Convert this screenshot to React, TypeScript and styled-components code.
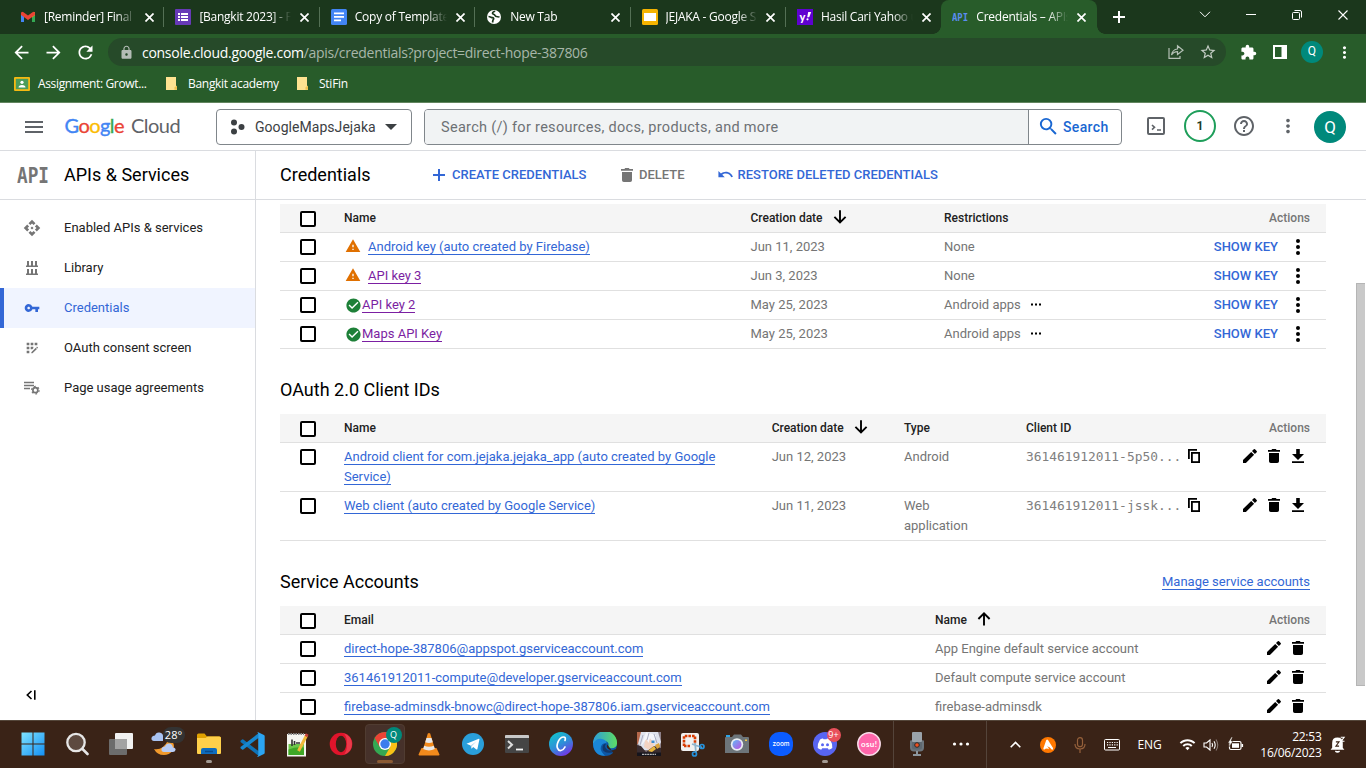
import React from 'react';
import styled, { createGlobalStyle } from 'styled-components';
import {
  MdApi, MdVpnKey, MdAppRegistration, MdMenu, MdSearch, MdHelpOutline, MdMoreVert, MdWarning,
  MdCheckCircle, MdUndo, MdExtension, MdStarBorder, MdLock, MdArrowBack, MdArrowForward, MdRefresh, MdWifi,
} from 'react-icons/md';

const Global = createGlobalStyle`
  * { box-sizing: border-box; }
  html, body { margin: 0; padding: 0; overflow: hidden; }
  body { font-family: Roboto, "Liberation Sans", sans-serif; font-size: 13px; color: #000; }
  svg { display: block; flex: none; }
`;

const ui = '"Open Sans", "Noto Sans", sans-serif';

const Screen = styled.div`
  width: 1366px; height: 768px; display: flex; flex-direction: column; overflow: hidden; background: #fff;
`;

/* ---------- browser chrome ---------- */
const TabStrip = styled.div`
  height: 34px; background: #1b371c; display: flex; padding-left: 9px; flex: none;
`;
const Tab = styled.div<{ $active?: boolean; $line?: boolean }>`
  position: relative; width: 155.4px; height: 34px; flex: none; display: flex; align-items: center;
  padding: 0 7px 0 11px; color: #fff; font: 12px ${ui};
  background: ${p => (p.$active ? '#285c2a' : 'transparent')};
  border-radius: 8px 8px 0 0;
  &::after {
    content: ''; position: absolute; right: 0; top: 7px; width: 1px; height: 20px;
    background: ${p => (p.$line ? '#547055' : 'transparent')};
  }
`;
const TabFoot = styled.i<{ $side: 'left' | 'right' }>`
  position: absolute; bottom: 0; ${p => p.$side}: -8px; width: 8px; height: 8px;
  background: radial-gradient(circle at ${p => (p.$side === 'left' ? '0 0' : '100% 0')}, transparent 7.5px, #285c2a 8px);
`;
const TabTitle = styled.span`
  width: 93px; margin-left: 8px; overflow: hidden; white-space: nowrap; line-height: 18px; letter-spacing: -0.25px;
  mask-image: linear-gradient(90deg, #000 72px, transparent 92px);
`;
const CloseBtn = styled.span`
  width: 16px; height: 16px; margin-left: auto; display: flex; align-items: center; justify-content: center;
`;
const NewTab = styled.div`width: 44px; display: flex; align-items: center; justify-content: center;`;
const WindowControls = styled.div`margin-left: auto; display: flex; height: 29px;`;
const Control = styled.div`width: 46px; display: flex; align-items: center; justify-content: center;`;

const Toolbar = styled.div`
  height: 36px; background: #285c2a; display: flex; align-items: center; padding: 0 5px 0 6px; flex: none; color: #fff;
`;
const ToolBtn = styled.div`
  width: 32px; height: 28px; display: flex; align-items: center; justify-content: center; flex: none;
`;
const NavButtons = styled.div`display: flex; width: 96px; margin: 0 0.5px 0 -0.5px;`;
const Omnibox = styled.div`
  width: 1118px; height: 28px; margin: 0 6px; border-radius: 14px; background: #264a29; display: flex; align-items: center;
  padding: 0 2px 0 11px; font: 14px ${ui}; color: #a8b7a9; letter-spacing: -0.285px;
`;
const Url = styled.span`margin-left: 8px; flex: 1; white-space: nowrap; b { color: #fff; font-weight: 400; }`;
const Profile = styled.span`
  width: 22px; height: 22px; border-radius: 50%; background: #00897b; color: #fff; font: 12px/21px Roboto, sans-serif; text-align: center;
`;
const Bookmarks = styled.div`
  height: 33px; background: #285c2a; border-bottom: 1px solid #62855f; display: flex; align-items: center;
  padding: 0 14px 5px; flex: none; color: #fff; font: 12px ${ui};
`;
const Bookmark = styled.div<{ $w: number; $gap: number; $ls: number }>`
  width: ${p => p.$w}px; display: flex; align-items: center; gap: ${p => p.$gap}px; letter-spacing: ${p => p.$ls}px; white-space: nowrap;
`;

/* ---------- console header ---------- */
const Header = styled.header`
  height: 48px; border-bottom: 1px solid #dadce0; display: flex; align-items: center; flex: none; padding: 0 20px 0 22px;
`;
const Logo = styled.div`
  width: 128px; margin: -3px 0 0 18.5px; font: 20px/24px Lato, sans-serif; color: #5f6368; white-space: nowrap; display: flex; gap: 7px;
  letter-spacing: -0.55px;
`;
const Brand = styled.span`-webkit-text-stroke: 0.35px; `;
const Tint = styled.span<{ $c: string }>`color: ${p => p.$c};`;
const ProjectPicker = styled.div`
  width: 196px; height: 36px; margin-left: 23.5px; border: 1px solid #80868b; border-radius: 4px; display: flex; align-items: center;
  padding: 0 14px 0 13px; color: #3c4043; font-size: 14px; letter-spacing: 0.05px;
`;
const ProjectName = styled.span`margin: 0 auto 0 9px; line-height: 18px;`;
const SearchBox = styled.div`
  width: 698px; height: 36px; margin-left: 12px; border: 1px solid #80868b; border-radius: 4px; display: flex; overflow: hidden;
`;
const SearchField = styled.div`
  width: 604px; background: #f1f3f4; border-right: 1px solid #80868b; color: #6d7175; font-size: 14.5px; line-height: 35px; padding-left: 16px;
  letter-spacing: 0.3px;
`;
const SearchButton = styled.div`
  flex: 1; display: flex; align-items: center; padding-left: 8px; gap: 3px; color: #1967d2; font-size: 14px; font-weight: 500; letter-spacing: 0.35px;
`;
const HeaderIcon = styled.div`
  width: 44px; height: 44px; display: flex; align-items: center; justify-content: center; color: #5f6368; flex: none;
`;
const HeaderTools = styled.div`display: flex; margin: -1px 4px 0 12px; align-items: center;`;
const CountRing = styled.span`
  width: 32px; height: 32px; border: 2px solid #1e9e5a; border-radius: 50%; color: #1e3c28; font-size: 12px; font-weight: 700; line-height: 28px; text-align: center;
`;
const Avatar = styled.span`
  width: 32px; height: 32px; border-radius: 50%; background: #00897b; color: #fff; font-size: 17px; line-height: 32px; text-align: center; flex: none;
`;

/* ---------- page ---------- */
const Body = styled.div`flex: 1; min-height: 0; display: flex;`;
const Sidebar = styled.nav`width: 256px; border-right: 1px solid #dadce0; display: flex; flex-direction: column; flex: none;`;
const Product = styled.div`
  height: 49px; border-bottom: 1px solid #dadce0; display: flex; align-items: center; padding: 0 0 1px 16.5px; gap: 15.5px; font-size: 18px; margin-bottom: 8px;
`;
const NavItem = styled.div<{ $active?: boolean }>`
  height: 40px; display: flex; align-items: center; color: ${p => (p.$active ? '#3367d6' : '#212121')};
  background: ${p => (p.$active ? '#f0f4ff' : 'transparent')};
  border-left: 4px solid ${p => (p.$active ? '#3367d6' : 'transparent')};
  padding-bottom: 1px;
`;
const NavIcon = styled.span<{ $active?: boolean }>`
  width: 56px; display: flex; justify-content: center; color: ${p => (p.$active ? '#3367d6' : '#757575')}; margin-right: 4px; padding-top: 1px;
`;
const Collapse = styled.div`margin-top: auto; height: 51px; padding: 20px 0 0 25px;`;

const Main = styled.main`flex: 1; min-width: 0; display: flex; flex-direction: column;`;
const ActionBar = styled.div`
  height: 49px; border-bottom: 1px solid #dadce0; display: flex; align-items: center; padding: 0 24px 1px; flex: none;
`;
const PageTitle = styled.h1`margin: 0; width: 152px; font-size: 18px; font-weight: 400;`;
const ActionButton = styled.div<{ $muted?: boolean; $mr?: number; $gap: number }>`
  display: flex; align-items: center; gap: ${p => p.$gap}px; margin-right: ${p => p.$mr ?? 0}px; font-weight: 500;
  color: ${p => (p.$muted ? '#757575' : '#3367d6')};
`;
const Scroll = styled.div`flex: 1; min-height: 0; display: flex; overflow: hidden;`;
const Content = styled.div`flex: 1; min-width: 0; padding: 4px 30px 0 24px;`;
const Scrollbar = styled.div`width: 10px; padding-top: 83px;`;
const Thumb = styled.div`width: 9px; height: 403px; background: #c9c9c9; border: 1px solid #b5b5b5; border-right: 0;`;

const SectionTitle = styled.div`
  display: flex; justify-content: space-between; align-items: center; padding-right: 16px; height: 65px;
  h2 { margin: 0; padding-top: 17px; font-size: 18px; line-height: 24px; font-weight: 400; }
  span { padding-top: 17px; }
`;
const Row = styled.div<{ $cols: string; $head?: boolean }>`
  display: grid; grid-template-columns: ${p => p.$cols}; border-bottom: 1px solid #e0e0e0; padding: 4px 0; line-height: 20px;
  color: ${p => (p.$head ? '#212121' : '#757575')}; background: ${p => (p.$head ? '#f5f5f5' : 'transparent')};
  ${p => p.$head && 'font-weight: 500; font-size: 12px;'}
`;
const Cell = styled.div<{ $w?: number }>`
  ${p => p.$w && `width: ${p.$w}px;`}
`;
const FlexCell = styled.div<{ $gap?: number }>`
  display: flex; height: 20px; align-items: center; gap: ${p => p.$gap ?? 0}px;
`;
const Split = styled.div`display: flex; justify-content: space-between;`;
const Mono = styled.span`font: 12.9px/20px "DejaVu Sans Mono", monospace; width: 162px; color: #808080;`;
const Link = styled.a<{ $visited?: boolean }>`
  color: ${p => (p.$visited ? '#7b1fa2' : '#3367d6')}; border-bottom: 1px solid currentColor; line-height: 20px;
`;
const Check = styled.span<{ $low?: boolean }>`
  width: 16px; height: 16px; margin: ${p => (p.$low ? 3 : 2)}px 0 0 20px; border: 2px solid #000; border-radius: 2px; background: #fff;
`;
const Actions = styled.div<{ $text?: boolean }>`
  display: flex; justify-content: flex-end; align-items: center; height: 20px; padding-right: ${p => (p.$text ? 16 : 20)}px; gap: 8px;
  color: ${p => (p.$text ? '#757575' : '#000')};
`;
const ShowKey = styled.span`color: #3367d6; font-weight: 500;`;
const IconSlot = styled.span<{ $w: number; $pull?: number; $lift?: number }>`
  width: ${p => p.$w}px; display: inline-flex; justify-content: center; margin-right: ${p => p.$pull ?? 0}px;
  margin-bottom: ${p => (p.$lift ?? 0) * 2}px;
`;

/* ---------- taskbar ---------- */
const Taskbar = styled.footer`
  height: 48px; background: #3a2317; border-top: 1px solid #54463a; display: flex; align-items: flex-start; flex: none; padding-left: 10.5px; color: #fff; font-family: ${ui};
`;
const TaskApp = styled.div<{ $active?: boolean; $running?: boolean }>`
  position: relative; width: 44px; height: 46px; flex: none; display: flex; align-items: center; justify-content: center;
  ${p => p.$running && `&::after { content: ''; position: absolute; bottom: 4px; left: 19px; width: 6px; height: 3px; border-radius: 2px; background: #a39a93; }`}
  ${p => p.$active && `&::before { content: ''; position: absolute; inset: 3px 2px 3px; border-radius: 4px; background: #46312a; border: 1px solid #503c31; }
  &::after { content: ''; position: absolute; bottom: 4px; left: 14px; width: 16px; height: 3px; border-radius: 2px; background: #8b5a33; }`}
  svg { position: relative; }
`;
const Badge = styled.span<{ $bg: string; $x: number; $y: number; $w: number; $h: number; $fs: number }>`
  position: absolute; left: ${p => p.$x}px; top: ${p => p.$y}px; width: ${p => p.$w}px; height: ${p => p.$h}px; border-radius: 8px;
  background: ${p => p.$bg}; color: #fff; font-size: ${p => p.$fs}px; line-height: ${p => p.$h - 1}px; text-align: center; white-space: nowrap;
`;
const Divider = styled.i<{ $m: string }>`width: 1px; height: 47px; background: #54443a; margin: ${p => p.$m};`;
const Tray = styled.div`display: flex; align-items: center; flex: 1; height: 47px; padding-left: 12.5px;`;
const TrayItem = styled.div<{ $w: number }>`width: ${p => p.$w}px; display: flex; justify-content: center; font-size: 12px; letter-spacing: -0.1px;`;
const Clock = styled.div`
  width: 70px; font-size: 12px; line-height: 16px; text-align: right; letter-spacing: -0.25px; white-space: nowrap;
`;

/* ---------- icons ---------- */
const Cross = ({ s = 8, w = 1.6 }: { s?: number; w?: number }) => (
  <svg width={s} height={s} viewBox="0 0 8 8" stroke="#fff" strokeWidth={(w * 8) / s} fill="none"><path d="M.4 .4l7.2 7.2M7.6 .4L.4 7.6" /></svg>
);
const Trash = () => (
  <svg width="12" height="14" viewBox="0 0 12 14" fill="currentColor"><path d="M0 1h3.4l.8-1h3.6l.8 1H12v1.7H0zM1 4h10v8.2Q11 14 9.2 14H2.8Q1 14 1 12.2z" /></svg>
);
const Pencil = () => (
  <svg width="14" height="14" viewBox="0 0 14 14" fill="currentColor"><path d="M0 11.1L8.2 2.9l2.9 2.9L2.9 14H0zM9 2.1L10.8.3q.6-.5 1.2 0l1.7 1.7q.5.6 0 1.2L11.9 5z" /></svg>
);
const Download = () => (
  <svg width="12" height="14" viewBox="0 0 12 14" fill="currentColor"><path d="M4.2 0h3.6v5H12L6 11 0 5h4.2zM0 12.3h12V14H0z" /></svg>
);
const Copy = () => (
  <svg width="12" height="14" viewBox="0 0 12 14" fill="none" stroke="#000" strokeWidth="1.8"><path d="M.9 10V.9H9" /><rect x="3.9" y="3.9" width="7.2" height="9.2" /></svg>
);
const Arrow = ({ up }: { up?: boolean }) => (
  <svg width="14" height="14" viewBox="0 0 14 14" fill="none" stroke="#000" strokeWidth="1.9">
    {up ? <path d="M7 13.6V1.6M1.4 7L7 1.4 12.6 7" /> : <path d="M7 .2v12M1.4 6.8L7 12.4l5.6-5.6" />}
  </svg>
);
const Dots = () => (
  <svg width="12" height="3" viewBox="0 0 12 3" fill="#000"><path d="M1 .5h2v2H1zM5 .5h2v2H5zM9 .5h2v2H9z" /></svg>
);
const MoreDots = () => (
  <svg width="4" height="16" viewBox="0 0 4 16" fill="currentColor"><circle cx="2" cy="2" r="2" /><circle cx="2" cy="8" r="2" /><circle cx="2" cy="14" r="2" /></svg>
);
const ApiMark = ({ w, h, c }: { w: number; h: number; c: string }) => (
  <svg width={w} height={h} viewBox="0 0 32 18" fill={c}>
    <text x="0" y="17" fontFamily="DejaVu Sans Mono" fontWeight="700" fontSize="22" textLength="32" lengthAdjust="spacingAndGlyphs">API</text>
  </svg>
);
const LibraryIcon = () => (
  <svg width="14" height="14" viewBox="0 0 14 14" fill="currentColor"><path d="M2 0h2v4.5h2V0h2v4.5h2V0h2v4.5h1V6H1V4.5h1zM2 8h2v4.5h2V8h2v4.5h2V8h2v4.5h1V14H1v-1.5h1z" /></svg>
);
const Agreements = () => (
  <svg width="16" height="14" viewBox="0 0 16 14"><path d="M0 1.5h10M0 4.5h10M0 7.5h6" stroke="currentColor" strokeWidth="1.6" /><g transform="translate(6.8 4.6) scale(.38)" fill="none" stroke="currentColor"><circle cx="12" cy="12" r="6.5" strokeWidth="4.5" /><circle cx="12" cy="12" r="10" strokeWidth="3" strokeDasharray="5 5.47" /></g></svg>
);
const Form = () => (
  <svg width="16" height="16" viewBox="0 0 16 16"><rect width="16" height="16" rx="1" fill="#673ab7" /><path d="M3 4h2v2H3zM3 7h2v2H3zM3 10h2v2H3zM6 4h7v2H6zM6 7h7v2H6zM6 10h7v2H6z" fill="#fff" /></svg>
);
const Gmail = () => (
  <svg width="16" height="16" viewBox="0 0 16 16"><path d="M1 4v9h3V7z" fill="#4285f4" /><path d="M15 4v9h-3V7z" fill="#34a853" /><path d="M12 4.5L15 3v3l-3 2.5z" fill="#fbbc04" /><path d="M1 4.5Q1 2 3.5 3.2L8 6.5l4.5-3.3Q15 2 15 4.5V6l-7 5-7-5z" fill="#ea4335" /></svg>
);
const Docs = () => (
  <svg width="16" height="16" viewBox="0 0 16 16"><rect width="16" height="16" rx="1.5" fill="#4285f4" /><path d="M3 3.5h10v1.8H3zM3 7h10v1.8H3zM3 10.5h7v1.8H3z" fill="#fff" /></svg>
);
const Globe = () => (
  <svg width="16" height="16" viewBox="0 0 16 16"><circle cx="8" cy="8" r="7" fill="#fff" /><path d="M2.5 7.5c2 0 2.5 1 4 1.2 1.5.3 1.500 1.300.5 2.300l-.5 2.500M9 2c-1 1-2.500 1-2.500 2.200S8.500 5 9 6.500s2.500 1 4.500 1.500" fill="none" stroke="#1b371c" strokeWidth="1.7" /></svg>
);
const Slides = () => (
  <svg width="16" height="16" viewBox="0 0 16 16"><rect width="16" height="16" rx="1.5" fill="#f5b400" /><rect x="2" y="4" width="12" height="8" fill="#fff" /></svg>
);
const Yahoo = () => (
  <svg width="16" height="16" viewBox="0 0 16 16"><rect width="16" height="16" fill="#5f01d1" /><text x="2.5" y="11.5" fontFamily="Lato" fontWeight="900" fontSize="11" fill="#fff">y</text><path d="M11.2 3h3l-2 5.2h-2z" fill="#fff" /><circle cx="10.5" cy="10.3" r="1.1" fill="#fff" /></svg>
);
const Classroom = () => (
  <svg width="16" height="14" viewBox="0 0 16 14"><rect width="16" height="14" rx="1" fill="#f5b912" /><rect x="1.8" y="1.8" width="12.4" height="10.4" fill="#4b9c5a" /><circle cx="8" cy="5.3" r="1.6" fill="#fff" /><path d="M4.5 10.5q0-2.5 3.5-2.5t3.5 2.5z" fill="#fff" /></svg>
);
const Folder = () => (
  <svg width="13" height="15" viewBox="0 0 13 15"><path d="M1 1h10v9l1 1v3H1z" fill="#ffe391" /><path d="M9.5 13.8v-2.6L12 9.5v4.3z" fill="#f0c24f" /></svg>
);

/* taskbar apps */
const WindowsLogo = () => (
  <svg width="24" height="24" viewBox="0 0 24 24"><defs><linearGradient id="wn" x1="0" y1="0" x2="1" y2="1"><stop stopColor="#7fe3ff" /><stop offset="1" stopColor="#1390f5" /></linearGradient></defs><path d="M.5 .5h11v11H.5zM12.5 .5h11v11h-11zM.5 12.5h11v11H.5zM12.5 12.5h11v11h-11z" fill="url(#wn)" /></svg>
);
const SearchApp = () => (
  <svg width="24" height="24" viewBox="0 0 24 24"><circle cx="11" cy="10.5" r="8.7" fill="#5d4a40" stroke="#e6e6e6" strokeWidth="2.3" /><path d="M17.5 17l5 5" stroke="#e6e6e6" strokeWidth="2.6" strokeLinecap="round" /></svg>
);
const TaskView = () => (
  <svg width="24" height="24" viewBox="0 0 24 24"><rect x="6" y="1" width="18" height="16" rx="1" fill="#f1f1f1" /><rect x="0" y="7" width="18" height="16" rx="1" fill="#6c6c6c" /><rect x="6" y="7" width="12" height="10" fill="#a3a3a3" /></svg>
);
const Weather = () => (
  <svg width="28" height="26" viewBox="0 0 28 26"><path d="M3 10q-3-.5-2.5-3T4 4.500Q5 1 8.500 1.500T12 5v5z" fill="#a9c3f2" /><path d="M17 9.500q6 0 6 6l-1 4q-4 4.500-9 4.500-7 0-10-6 9 1.500 14-8.500z" fill="#f19a2c" /><path d="M13 21q-3-.5-2.500-3t3.500-2.500q1-3 4-3t4 4q3 .5 2.500 2.500T22 21z" fill="#b9cdf5" /></svg>
);
const Explorer = () => (
  <svg width="26" height="24" viewBox="0 0 26 24"><path d="M1 3q0-1.500 1.500-1.500h6l2.500 3H23q2 0 2 1.500v10H1z" fill="#e0a100" /><path d="M1 6h8.500l2-1.500H23.500Q25 4.500 25 6v15q0 1-1 1H2q-1 0-1-1z" fill="#ffd04a" /><path d="M5 22v-4q0-2 2-2h12q2 0 2 2v4z" fill="#0f6cbd" /><path d="M9 19.500h8" stroke="#0a4a8a" strokeWidth="1.5" /></svg>
);
const VSCode = () => (
  <svg width="25" height="25" viewBox="0 0 24 24"><path d="M.5 8.500L2 7.200q.6-.4 1.200 0L18 18.500V23L.5 9.700z" fill="#0f73b8" /><path d="M.5 15.500L2 16.800q.6.400 1.200 0L18 5.500V1L.5 14.300z" fill="#1787cf" /><path d="M17.500.3L23 2.800q.700.400.700 1.200v16q0 .800-.7 1.200l-5.500 2.500q-.8.200-1.200-.5Q17.500 23.500 17.500 22V2q0-1.500-1.200-1.300z" fill="#2ba5f3" /></svg>
);
const NotepadPP = () => (
  <svg width="24" height="25" viewBox="0 0 24 25"><rect x="2" y="2" width="19" height="22.500" fill="#f5f5f0" /><rect x="3.500" y="12" width="15.500" height="11" fill="#6cc84a" /><path d="M3.500 17.500q7-3 15.500-2V23H3.500z" fill="#3fa726" /><path d="M3 2h16" stroke="#888" strokeWidth="2" strokeDasharray="1.5 1" /><path d="M7 7.500v6.500M9.500 9v4M11 11h4" stroke="#333" strokeWidth="1.600" /><path d="M13.500 19L21.500 3.500" stroke="#f0b93a" strokeWidth="3" /><path d="M21 4.500l1.200-2.500" stroke="#c3423a" strokeWidth="3" /></svg>
);
const Opera = () => (
  <svg width="24" height="24" viewBox="0 0 24 24"><circle cx="12" cy="12" r="11.300" fill="#e0142b" /><ellipse cx="12" cy="12" rx="5.200" ry="8.300" fill="#3a2317" /><path d="M14 1q9 2.500 9 11t-9 11q4-2 4-11T14 1z" fill="#f04a58" opacity=".7" /></svg>
);
const Chrome = () => (
  <svg width="24" height="24" viewBox="0 0 24 24"><circle cx="12" cy="12" r="12" fill="#34a853" /><path d="M12 0a12 12 0 0 1 10.400 6H12L6.800 15 1.600 6A12 12 0 0 1 12 0z" fill="#ea4335" /><path d="M22.400 6A12 12 0 0 1 12 24l5.200-9L12 6z" fill="#fbc116" /><circle cx="12" cy="12" r="6" fill="#fff" /><circle cx="12" cy="12" r="4.700" fill="#3b7ded" /></svg>
);
const Vlc = () => (
  <svg width="22" height="24" viewBox="0 0 22 24"><path d="M3.500 16h15l3 6.500q0 1-1 1h-19q-1 0-1-1z" fill="#f28a1c" /><path d="M9.800 1.500q1.200-1 2.400 0L17.500 19Q11 22.500 4.500 19z" fill="#f28a1c" /><path d="M8.500 6h5l1.300 4.300q-3.800 1.600-7.600 0zM6.200 13.700q4.800 2.200 9.600 0l1 3.300q-5.800 2.800-11.600 0z" fill="#e9e9e9" /></svg>
);
const Telegram = () => (
  <svg width="22" height="22" viewBox="0 0 22 22"><circle cx="11" cy="11" r="11" fill="#2a9fda" /><path d="M4.500 10.800L16.800 5.800q.8-.2.600.7l-2 9.500q-.2.900-1 .4l-3.200-2.300-1.600 1.600-1-3.200z" fill="#fff" /><path d="M8.600 12.500l6-4.200-4.600 4.700-.3 2.600z" fill="#b7d9ef" /></svg>
);
const Terminal = () => (
  <svg width="24" height="20" viewBox="0 0 24 20"><rect y="1" width="24" height="18" rx="1" fill="#454545" /><path d="M0 2q0-1 1-1h22q1 0 1 1v2H0z" fill="#c8c8c8" /><path d="M3 7l4 3.700L3 14.500" stroke="#ddd" strokeWidth="2" fill="none" /><path d="M11 15.500h7" stroke="#f4f4f4" strokeWidth="1.8" /></svg>
);
const Canva = () => (
  <svg width="24" height="24" viewBox="0 0 24 24"><defs><linearGradient id="cv" x1=".2" y1="0" x2=".8" y2="1"><stop stopColor="#10c4cc" /><stop offset=".5" stopColor="#2e8fd8" /><stop offset="1" stopColor="#7d2ae8" /></linearGradient></defs><circle cx="12" cy="12" r="12" fill="url(#cv)" /><path d="M16 8.500q1.200-3.500-1.500-3.500-3.200 0-5.200 4.300t-.8 6.800q1 2.700 3.400 2.400 2.600-.4 4.100-3.500" fill="none" stroke="#fff" strokeWidth="1.700" strokeLinecap="round" /></svg>
);
const Edge = () => (
  <svg width="24" height="24" viewBox="0 0 24 24"><defs><linearGradient id="eg" x1="0" y1="0" x2="1" y2="0"><stop stopColor="#2c9ddb" /><stop offset="1" stopColor="#5ddc64" /></linearGradient></defs><circle cx="12" cy="12" r="12" fill="#0d57a6" /><path d="M0 12A12 12 0 0 1 24 10q.5 6-5.500 6.200-4.500 0-3-3 .6-3.200-3.500-4.200Q5 7.500 0 12z" fill="url(#eg)" /><path d="M0 12q3-6 9-5 5 1 4.500 4.500-4-1-5.500 3T12 23.800Q1 24 0 12z" fill="#1b87d8" /><path d="M13.300 11.500q-2.500 2.500 0 5.500t9.200 0q-1 2-3 3.500Q9 22 9.500 15q.5-3.500 3.800-3.500z" fill="#10386d" /><path d="M14.500 12.500q-2 3 1.500 5t7-.5l2 3-2 5z" fill="#3a2317" /></svg>
);
const Portrait = () => (
  <svg width="24" height="24" viewBox="0 0 24 24"><rect width="24" height="24" fill="#8d8088" /><path d="M3 0h18l3 10-4 8H4L0 9z" fill="#dfe2ec" /><path d="M8 8q4-3 9 1l-1 7-4 2-5-3z" fill="#f3d3c2" /><path d="M9 0L4 14l5.500-7 2 4 1.500-5 4 5.500L19 3z" fill="#f4f5fa" /><path d="M6 3L3 13M17 2l3 9M12 1l-2 7" stroke="#a3a6bb" strokeWidth=".9" /><path d="M14.500 8.500h3v2.500h-3z" fill="#3d8fd0" /><path d="M0 13l4 1 5 6 8-6 7 2v8H0z" fill="#3a2d30" /><path d="M11 19l6-5 2 3-4 3z" fill="#e8b63c" /><path d="M18 13l4-2 1 4-3 2z" fill="#dba43a" /><path d="M0 0h4L1 12H0z" fill="#b5674a" /><rect y="20.500" width="24" height="3.500" fill="#15141c" /><path d="M5 22.300h14" stroke="#ddd" strokeWidth="1" strokeDasharray="2 .6" /></svg>
);
const Snip = () => (
  <svg width="25" height="25" viewBox="0 0 25 25"><rect x="1" y="1" width="18" height="18" rx="2" fill="#f1f1f1" /><path d="M4 14V4h11v8" fill="none" stroke="#d83b01" strokeWidth="2.600" strokeDasharray="2.600 1" /><path d="M4 14h6" stroke="#d83b01" strokeWidth="2.500" strokeDasharray="2.500 1" /><path d="M12 12l10 3.500M15 11l1 10" stroke="#8fb4cc" strokeWidth="1.8" /><circle cx="22" cy="14.500" r="2" fill="none" stroke="#2491dc" strokeWidth="1.700" /><circle cx="14.500" cy="22" r="2" fill="none" stroke="#2491dc" strokeWidth="1.700" /></svg>
);
const Camera = () => (
  <svg width="24" height="22" viewBox="0 0 24 22"><defs><linearGradient id="cm" x1="0" y1="0" x2="1" y2="1"><stop stopColor="#5fb8f5" /><stop offset="1" stopColor="#c04fe0" /></linearGradient></defs><path d="M7 4l2-2.500h7L18 4h5q1 0 1 1v15H0V5q0-1 1-1z" fill="#6d757a" /><rect x="1" y="2" width="4" height="2" fill="#2ea4e6" /><rect x="20" y="6.500" width="2" height="1.500" fill="#f3c844" /><circle cx="12" cy="11.500" r="6.200" fill="#e9edf2" /><circle cx="12" cy="11.500" r="4.500" fill="url(#cm)" /></svg>
);
const Zoom = () => (
  <svg width="24" height="24" viewBox="0 0 24 24"><rect width="24" height="24" rx="10" fill="#0b5cff" /><text x="12" y="14.200" textAnchor="middle" fontFamily="Inter" fontWeight="500" fontSize="7" textLength="17" lengthAdjust="spacingAndGlyphs" fill="#fff">zoom</text></svg>
);
const Discord = () => (
  <svg width="24" height="24" viewBox="0 0 24 24"><circle cx="12" cy="12" r="12" fill="#5865f2" /><path d="M7 7.500Q9 6.400 10 6.500l.500.800h3l.5-.8q1 0 3 1 2.800 4.500 2.300 8.500-1.500 1.300-3.500 1.700l-1-1.500H9.200l-1 1.500Q6.200 17.300 4.700 16 4.200 12 7 7.500z" fill="#fff" /><circle cx="9.500" cy="12.700" r="1.500" fill="#5865f2" /><circle cx="14.500" cy="12.700" r="1.500" fill="#5865f2" /></svg>
);
const Osu = () => (
  <svg width="24" height="24" viewBox="0 0 24 24"><circle cx="12" cy="12" r="11.200" fill="#ff66ab" stroke="#f7dbe8" strokeWidth="1.500" /><text x="12" y="14.500" textAnchor="middle" fontFamily="Lato" fontWeight="700" fontSize="8" textLength="16" fill="#fff">osu!</text></svg>
);
const Recorder = () => (
  <svg width="16" height="24" viewBox="0 0 16 24"><path d="M2 8.500v7q0 3 3 3h6q3 0 3-3v-7" fill="#5e6870" stroke="#6c757c" strokeWidth="2" /><rect x="3" width="10" height="10" rx="1" fill="#9aa3aa" /><circle cx="8" cy="13" r="2.300" fill="#f0501e" stroke="#2b2b2b" /><path d="M8 19v4M4 23h8" stroke="#8c959d" strokeWidth="2" /></svg>
);

const tabs: { title: string; icon: React.ReactNode }[] = [
  { title: '[Reminder] Final D', icon: <Gmail /> },
  { title: '[Bangkit 2023] - F', icon: <Form /> },
  { title: 'Copy of Template', icon: <Docs /> },
  { title: 'New Tab', icon: <Globe /> },
  { title: 'JEJAKA - Google S', icon: <Slides /> },
  { title: 'Hasil Cari Yahoo u', icon: <Yahoo /> },
  { title: 'Credentials – APIs', icon: <ApiMark w={16} h={10} c="#5b8def" /> },
];

const nav = [
  { label: 'Enabled APIs & services', icon: <MdApi size={18} /> },
  { label: 'Library', icon: <LibraryIcon /> },
  { label: 'Credentials', icon: <MdVpnKey size={16} />, active: true },
  { label: 'OAuth consent screen', icon: <MdAppRegistration size={16} /> },
  { label: 'Page usage agreements', icon: <Agreements /> },
];

const keys = [
  { name: 'Android key (auto created by Firebase)', date: 'Jun 11, 2023', limit: 'None', warn: true },
  { name: 'API key 3', date: 'Jun 3, 2023', limit: 'None', warn: true, visited: true },
  { name: 'API key 2', date: 'May 25, 2023', limit: 'Android apps', visited: true },
  { name: 'Maps API Key', date: 'May 25, 2023', limit: 'Android apps', visited: true },
];
const clients = [
  { name: 'Android client for com.jejaka.jejaka_app (auto created by Google Service)', date: 'Jun 12, 2023', type: 'Android', id: '361461912011-5p50...' },
  { name: 'Web client (auto created by Google Service)', date: 'Jun 11, 2023', type: 'Web application', id: '361461912011-jssk...' },
];
const accounts = [
  { email: 'direct-hope-387806@appspot.gserviceaccount.com', name: 'App Engine default service account' },
  { email: '361461912011-compute@developer.gserviceaccount.com', name: 'Default compute service account' },
  { email: 'firebase-adminsdk-bnowc@direct-hope-387806.iam.gserviceaccount.com', name: 'firebase-adminsdk' },
];
const keyCols = '64px 406.5px 193.5px 1fr';
const clientCols = '64px 427.7px 132.3px 122px 182px 1fr';
const accountCols = '64px 591px 260px 1fr';

const SortHead = ({ label, up }: { label: string; up?: boolean }) => (
  <FlexCell $gap={10}>{label}<IconSlot $w={14} $lift={1}><Arrow up={up} /></IconSlot></FlexCell>
);

export default function App() {
  return (
    <Screen>
      <Global />
      <TabStrip>
        {tabs.map((t, i) => (
          <Tab key={t.title} $active={i === 6} $line={i < 5}>
            {i === 6 && <><TabFoot $side="left" /><TabFoot $side="right" /></>}
            {t.icon}
            <TabTitle>{t.title}</TabTitle>
            <CloseBtn><Cross s={9} w={1.7} /></CloseBtn>
          </Tab>
        ))}
        <NewTab><svg width="12" height="12" viewBox="0 0 12 12"><path d="M6 0v12M0 6h12" stroke="#fff" strokeWidth="2" /></svg></NewTab>
        <WindowControls>
          <Control><svg width="12" height="7" viewBox="0 0 12 7"><path d="M1 .8l5 5 5-5" stroke="#fff" fill="none" /></svg></Control>
          <Control><svg width="10" height="1"><rect width="10" height="1" fill="#fff" /></svg></Control>
          <Control><svg width="10" height="10" viewBox="0 0 10 10" fill="none" stroke="#fff"><rect x=".5" y="2.5" width="7" height="7" rx="1" /><path d="M2.5 .5H8q1.5 0 1.5 1.5v5.5" /></svg></Control>
          <Control><Cross s={10} w={1.1} /></Control>
        </WindowControls>
      </TabStrip>
      <Toolbar>
        <NavButtons>
          <ToolBtn><MdArrowBack size={21} /></ToolBtn>
          <ToolBtn><MdArrowForward size={21} /></ToolBtn>
          <ToolBtn><MdRefresh size={21} /></ToolBtn>
        </NavButtons>
        <Omnibox>
          <MdLock size={15} color="#b4bcb6" />
          <Url><b>console.cloud.google.com</b>/apis/credentials?project=direct-hope-387806</Url>
          <ToolBtn>
            <svg width="16" height="16" viewBox="0 0 16 16" fill="none" stroke="#b4c0b5" strokeWidth="1.2"><path d="M1 4v10.4h11V12M9.5 5V1.8L15 6.2l-5.5 4.3V7.6Q5.5 7.6 3.5 11 4.5 5.5 9.5 5z" /></svg>
          </ToolBtn>
          <ToolBtn><MdStarBorder size={18} color="#c3ccc4" /></ToolBtn>
        </Omnibox>
        <ToolBtn><MdExtension size={17} /></ToolBtn>
        <ToolBtn><svg width="14" height="14" viewBox="0 0 14 14"><path d="M0 0h14v14H0zM2 2v10h6.5V2z" fill="#fff" fillRule="evenodd" /></svg></ToolBtn>
        <ToolBtn><Profile>Q</Profile></ToolBtn>
        <ToolBtn><MdMoreVert size={19} /></ToolBtn>
      </Toolbar>
      <Bookmarks>
        <Bookmark $w={151} $gap={8} $ls={-0.35}><Classroom />Assignment: Growt...</Bookmark>
        <Bookmark $w={131} $gap={10} $ls={-0.3}><Folder />Bangkit academy</Bookmark>
        <Bookmark $w={60} $gap={10} $ls={-0.25}><Folder />StiFin</Bookmark>
      </Bookmarks>

      <Header>
        <MdMenu size={24} color="#5f6368" />
        <Logo>
          <Brand>
            <Tint $c="#4285f4">G</Tint><Tint $c="#ea4335">o</Tint><Tint $c="#fbbc04">o</Tint><Tint $c="#4285f4">g</Tint><Tint $c="#34a853">l</Tint><Tint $c="#ea4335">e</Tint>
          </Brand>
          <span>Cloud</span>
        </Logo>
        <ProjectPicker>
          <svg width="16" height="16" viewBox="0 0 16 16" fill="#3c4043"><circle cx="4" cy="3.5" r="3" /><circle cx="4" cy="12.5" r="3" /><circle cx="11.5" cy="8" r="3" /></svg>
          <ProjectName>GoogleMapsJejaka</ProjectName>
          <svg width="12" height="6" viewBox="0 0 12 6"><path d="M0 0h12L6 6z" fill="#3c4043" /></svg>
        </ProjectPicker>
        <SearchBox>
          <SearchField>Search (/) for resources, docs, products, and more</SearchField>
          <SearchButton><MdSearch size={23} />Search</SearchButton>
        </SearchBox>
        <HeaderTools>
          <HeaderIcon><svg width="18" height="18" viewBox="0 0 18 18" fill="none" stroke="#5f6368" strokeWidth="2"><rect x="1" y="1" width="16" height="16" rx="1" /><path d="M5 8l2.5 2.3L5 12.6M10 13h4" strokeWidth="1.6" /></svg></HeaderIcon>
          <HeaderIcon><CountRing>1</CountRing></HeaderIcon>
          <HeaderIcon><MdHelpOutline size={24} /></HeaderIcon>
          <HeaderIcon><MdMoreVert size={22} /></HeaderIcon>
        </HeaderTools>
        <Avatar>Q</Avatar>
      </Header>

      <Body>
        <Sidebar>
          <Product><ApiMark w={32} h={18} c="#757575" />APIs &amp; Services</Product>
          {nav.map(n => (
            <NavItem key={n.label} $active={n.active}><NavIcon $active={n.active}>{n.icon}</NavIcon>{n.label}</NavItem>
          ))}
          <Collapse><svg width="12" height="12" viewBox="0 0 12 12" fill="none" stroke="#000" strokeWidth="1.6"><path d="M6.5 2L2.3 6l4.2 4M9.8 1.2v9.6" /></svg></Collapse>
        </Sidebar>
        <Main>
          <ActionBar>
            <PageTitle>Credentials</PageTitle>
            <ActionButton $gap={6} $mr={34.5}>
              <svg width="14" height="12" viewBox="0 0 14 12"><path d="M7 0v12M1 6h12" stroke="#3367d6" strokeWidth="2" /></svg>CREATE CREDENTIALS
            </ActionButton>
            <ActionButton $muted $gap={6} $mr={32}><Trash />DELETE</ActionButton>
            <ActionButton $gap={4}><MdUndo size={17} />RESTORE DELETED CREDENTIALS</ActionButton>
          </ActionBar>
          <Scroll>
            <Content>
              <Row $cols={keyCols} $head>
                <Check $low /><Cell>Name</Cell><SortHead label="Creation date" />
                <Split><Cell>Restrictions</Cell><Actions $text>Actions</Actions></Split>
              </Row>
              {keys.map(k => (
                <Row key={k.name} $cols={keyCols}>
                  <Check />
                  <FlexCell>
                    <IconSlot $w={18} $pull={k.warn ? 6 : 0} $lift={k.warn ? 1 : 0}>{k.warn ? <MdWarning size={16} color="#e07000" /> : <MdCheckCircle size={17} color="#1e8038" />}</IconSlot>
                    <span><Link $visited={k.visited}>{k.name}</Link></span>
                  </FlexCell>
                  <Cell>{k.date}</Cell>
                  <Split>
                    <FlexCell $gap={9}>{k.limit}{k.limit !== 'None' && <IconSlot $w={12} $lift={1}><Dots /></IconSlot>}</FlexCell>
                    <Actions><ShowKey>SHOW KEY</ShowKey><IconSlot $w={24} $pull={-4}><MoreDots /></IconSlot></Actions>
                  </Split>
                </Row>
              ))}
              <SectionTitle><h2>OAuth 2.0 Client IDs</h2></SectionTitle>
              <Row $cols={clientCols} $head>
                <Check $low /><Cell>Name</Cell><SortHead label="Creation date" /><Cell>Type</Cell><Cell>Client ID</Cell><Actions $text>Actions</Actions>
              </Row>
              {clients.map(c => (
                <Row key={c.id} $cols={clientCols}>
                  <Check />
                  <Cell $w={390}><Link>{c.name}</Link></Cell>
                  <Cell>{c.date}</Cell>
                  <Cell $w={70}>{c.type}</Cell>
                  <FlexCell><Mono>{c.id}</Mono><IconSlot $w={12} $lift={1}><Copy /></IconSlot></FlexCell>
                  <Actions>
                    <IconSlot $w={16} $lift={1}><Pencil /></IconSlot><IconSlot $w={16} $lift={1}><Trash /></IconSlot><IconSlot $w={16} $lift={1}><Download /></IconSlot>
                  </Actions>
                </Row>
              ))}
              <SectionTitle><h2>Service Accounts</h2><span><Link>Manage service accounts</Link></span></SectionTitle>
              <Row $cols={accountCols} $head>
                <Check $low /><Cell>Email</Cell><SortHead label="Name" up /><Actions $text>Actions</Actions>
              </Row>
              {accounts.map(a => (
                <Row key={a.email} $cols={accountCols}>
                  <Check />
                  <Cell><Link>{a.email}</Link></Cell>
                  <Cell>{a.name}</Cell>
                  <Actions><IconSlot $w={16} $lift={1}><Pencil /></IconSlot><IconSlot $w={16} $lift={1}><Trash /></IconSlot></Actions>
                </Row>
              ))}
            </Content>
            <Scrollbar><Thumb /></Scrollbar>
          </Scroll>
        </Main>
      </Body>

      <Taskbar>
        <TaskApp><WindowsLogo /></TaskApp>
        <TaskApp><SearchApp /></TaskApp>
        <TaskApp><TaskView /></TaskApp>
        <TaskApp><Weather /><Badge $bg="#333" $x={20} $y={6} $w={22} $h={16} $fs={11}>28°</Badge></TaskApp>
        <TaskApp $running><Explorer /></TaskApp>
        <TaskApp><VSCode /></TaskApp>
        <TaskApp><NotepadPP /></TaskApp>
        <TaskApp><Opera /></TaskApp>
        <TaskApp $active><Chrome /><Badge $bg="#00897b" $x={23} $y={6} $w={16} $h={16} $fs={9}>Q</Badge></TaskApp>
        <TaskApp><Vlc /></TaskApp>
        <TaskApp><Telegram /></TaskApp>
        <TaskApp><Terminal /></TaskApp>
        <TaskApp><Canva /></TaskApp>
        <TaskApp><Edge /></TaskApp>
        <TaskApp><Portrait /></TaskApp>
        <TaskApp><Snip /></TaskApp>
        <TaskApp><Camera /></TaskApp>
        <TaskApp><Zoom /></TaskApp>
        <TaskApp $running><Discord /><Badge $bg="#e8505b" $x={24} $y={7} $w={14} $h={14} $fs={9}>9+</Badge></TaskApp>
        <TaskApp><Osu /></TaskApp>
        <Divider $m="0 1px 0 2.5px" />
        <TaskApp><Recorder /></TaskApp>
        <TaskApp><svg width="18" height="4" viewBox="0 0 18 4" fill="#fff"><circle cx="2.5" cy="2" r="1.6" /><circle cx="9" cy="2" r="1.6" /><circle cx="15.5" cy="2" r="1.6" /></svg></TaskApp>
        <Divider $m="0 0 0 3px" />
        <Tray>
          <TrayItem $w={32}><svg width="11" height="7" viewBox="0 0 11 7"><path d="M.7 6.2L5.5 1.4l4.8 4.8" fill="none" stroke="#fff" strokeWidth="1.6" /></svg></TrayItem>
          <TrayItem $w={32}><svg width="16" height="16" viewBox="0 0 16 16"><circle cx="8" cy="8" r="8" fill="#ff7800" /><path d="M6.2 3.2q.8-1.200 1.800-.2l5 8q.6 1.800-1 1.700-2.500-3.200-5-3.500 1.500 1.200 2 3-2.500-1.500-5 .6-1-.5-.5-1.800z" fill="#fff" /></svg></TrayItem>
          <TrayItem $w={32}><svg width="12" height="16" viewBox="0 0 12 16" fill="none" stroke="#95603b" strokeWidth="1.2"><rect x="3.5" y=".7" width="5" height="9" rx="2.5" /><path d="M1 7q0 5 5 5t5-5M6 12v4" /></svg></TrayItem>
          <TrayItem $w={32}><svg width="16" height="12" viewBox="0 0 16 12"><rect x=".5" y=".5" width="15" height="10.5" rx="1" fill="none" stroke="#fff" /><path d="M3 3.5h11M3 5.8h11" stroke="#fff" strokeWidth="1.2" strokeDasharray="1.2 1.2" /><path d="M4 8.5h8" stroke="#fff" /></svg></TrayItem>
          <TrayItem $w={44}>ENG</TrayItem>
          <TrayItem $w={32}><MdWifi size={17} /></TrayItem>
          <TrayItem $w={15}><svg width="16" height="14" viewBox="0 0 16 14" fill="none" stroke="#fff" strokeWidth="1.1"><path d="M1 5h2.5L7 2v10L3.5 9H1z" /><path d="M9 5q1.2 2 0 4M11 3.2q2.4 3.8 0 7.6" /><path d="M13 1.5q3.5 5.5 0 11" opacity=".4" /></svg></TrayItem>
          <TrayItem $w={33}><svg width="17" height="15" viewBox="0 0 17 15"><rect x="2.5" y="4.5" width="11.5" height="8" rx="1.5" fill="none" stroke="#fff" strokeWidth="1.2" /><rect x="5" y="6.3" width="7" height="4.5" fill="#fff" /><path d="M15.3 7v3" stroke="#fff" strokeWidth="1.6" /><path d="M4.5 0L1 6h2l-1 4 4-6H4l1.5-4z" fill="#fff" stroke="#3a2317" strokeWidth=".4" /></svg></TrayItem>
          <Clock>22:53<br />16/06/2023</Clock>
          <TrayItem $w={32}><svg width="16" height="17" viewBox="0 0 15 16"><path d="M2 11V6.5Q2 1.5 7 1.5t5 5V11l1.5 2H.5z" fill="#fff" /><path d="M5 14.2q2 1.5 4 0" stroke="#fff" strokeWidth="1.4" fill="none" /><path d="M5.5 5.5h3l-3 4h3" stroke="#3a2317" fill="none" /><path d="M10 1.2h3.3L10.3 5h3.3" stroke="#fff" fill="none" /></svg></TrayItem>
        </Tray>
      </Taskbar>
    </Screen>
  );
}
